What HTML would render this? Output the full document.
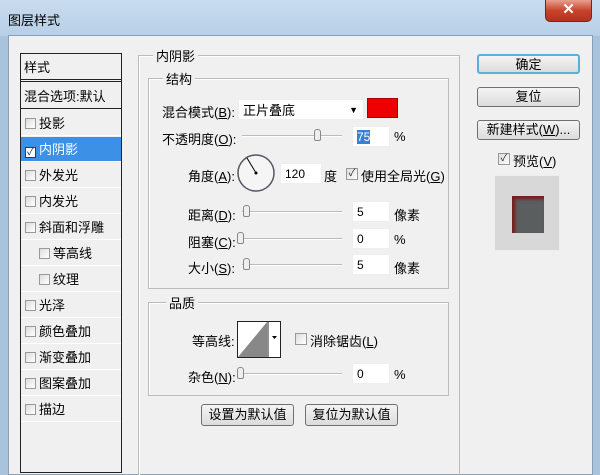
<!DOCTYPE html>
<html><head><meta charset="utf-8"><style>
*{margin:0;padding:0;box-sizing:border-box}
body{width:600px;height:470px;overflow:hidden;background:#a9c3dc;font-family:"Liberation Sans","Noto Sans CJK SC",sans-serif;font-size:13px;color:#000;position:relative}
.a{position:absolute;white-space:nowrap}
.title{left:0;top:0;width:600px;height:36px;background:linear-gradient(#c9dcef,#b7cfe7)}
.client{left:8px;top:35px;width:585px;height:440px;background:#f0f0f0;border:1px solid #8aa0b8}
.close{left:545px;top:0;width:47px;height:22px;background:linear-gradient(#e8a08e,#c8442c 50%,#b5311c);border:1px solid #6b2a20;border-top:none;border-radius:0 0 5px 5px;color:#fff;font-weight:bold;text-align:center;line-height:20px;font-size:15px}
.list{left:20px;top:53px;width:102px;height:420px;background:#f0f0f0;border:1px solid #222}
.it{position:absolute;left:0;width:100px;height:25px;line-height:25px;border-bottom:1px solid #fff}
.cb{display:inline-block;width:11px;height:11px;border:1px solid #999;background:linear-gradient(135deg,#ddd,#fff);vertical-align:-1px;margin-right:3px}
.grp{border:1px solid #bbb;box-shadow:1px 1px 0 #fff inset}
.lg{background:#f0f0f0;padding:0 3px}
.inp{background:#fff;border:1px solid #eee;height:21px;line-height:21px;padding-left:4px;font-size:12px}
.sl{height:2px;background:#bbb;border-bottom:1px solid #fff}
.th{width:7px;height:12px;border:1px solid #888;border-radius:3px 3px 2px 2px;background:#eee}
.btn{border:1px solid #707070;border-radius:3px;background:linear-gradient(#f4f4f4,#dcdcdc);text-align:center;line-height:18px}
</style></head><body>
<div class="a title"></div>
<div class="a" style="left:8px;top:10px;font-size:13px">图层样式</div>
<div class="a close">✕</div>
<div class="a client"></div>

<div class="a list">
 <div class="it" style="top:0;height:28px;line-height:28px;padding-left:3px;border-bottom:3px double #222">样式</div>
 <div class="it" style="top:30px;padding-left:3px;border-bottom:1px solid #222">混合选项:默认</div>
 <div class="it" style="top:57px;padding-left:4px"><span class="cb"></span>投影</div>
 <div class="it" style="top:83px;padding-left:4px;background:#3c91e6;color:#fff"><span class="cb" style="background:#fff;border-color:#336;color:#224;font-size:10px;line-height:9px;text-align:center">✓</span>内阴影</div>
 <div class="it" style="top:109px;padding-left:4px"><span class="cb"></span>外发光</div>
 <div class="it" style="top:135px;padding-left:4px"><span class="cb"></span>内发光</div>
 <div class="it" style="top:161px;padding-left:4px"><span class="cb"></span>斜面和浮雕</div>
 <div class="it" style="top:187px;padding-left:18px"><span class="cb"></span>等高线</div>
 <div class="it" style="top:213px;padding-left:18px"><span class="cb"></span>纹理</div>
 <div class="it" style="top:239px;padding-left:4px"><span class="cb"></span>光泽</div>
 <div class="it" style="top:265px;padding-left:4px"><span class="cb"></span>颜色叠加</div>
 <div class="it" style="top:291px;padding-left:4px"><span class="cb"></span>渐变叠加</div>
 <div class="it" style="top:317px;padding-left:4px"><span class="cb"></span>图案叠加</div>
 <div class="it" style="top:343px;padding-left:4px"><span class="cb"></span>描边</div>
</div>

<div class="a grp" style="left:138px;top:55px;width:322px;height:420px;border-bottom:none"></div>
<div class="a lg" style="left:153px;top:46px">内阴影</div>
<div class="a grp" style="left:148px;top:78px;width:301px;height:211px"></div>
<div class="a lg" style="left:163px;top:69px">结构</div>

<div class="a" style="left:162px;top:102px">混合模式(<u>B</u>):</div>
<div class="a inp" style="left:238px;top:99px;width:126px;font-size:13px">正片叠底<span style="position:absolute;right:5px;font-size:9px">▼</span></div>
<div class="a" style="left:367px;top:98px;width:31px;height:20px;background:#e00;border:1px solid #a00"></div>

<div class="a" style="left:162px;top:129px">不透明度(<u>O</u>):</div>
<div class="a sl" style="left:242px;top:135px;width:100px"></div>
<div class="a th" style="left:314px;top:129px"></div>
<div class="a inp" style="left:352px;top:126px;width:38px"><span style="background:#3a7fd0;color:#fff">75</span></div>
<div class="a" style="left:394px;top:129px">%</div>

<div class="a" style="left:188px;top:166px">角度(<u>A</u>):</div>
<svg class="a" style="left:236px;top:152px" width="40" height="42"><circle cx="20" cy="21" r="18" fill="#f5f5f5" stroke="#556" stroke-width="1.5"/><line x1="20" y1="21" x2="11" y2="6" stroke="#000"/><circle cx="20" cy="21" r="1.5"/></svg>
<div class="a inp" style="left:280px;top:163px;width:42px">120</div>
<div class="a" style="left:324px;top:166px">度</div>
<span class="a cb" style="left:346px;top:168px;width:12px;height:12px;font-size:10px;line-height:10px;text-align:center;color:#224">✓</span>
<div class="a" style="left:361px;top:166px">使用全局光(<u>G</u>)</div>

<div class="a" style="left:188px;top:205px">距离(<u>D</u>):</div>
<div class="a sl" style="left:242px;top:211px;width:100px"></div>
<div class="a th" style="left:243px;top:205px"></div>
<div class="a inp" style="left:352px;top:201px;width:38px">5</div>
<div class="a" style="left:394px;top:205px">像素</div>

<div class="a" style="left:188px;top:232px">阻塞(<u>C</u>):</div>
<div class="a sl" style="left:238px;top:238px;width:104px"></div>
<div class="a th" style="left:237px;top:232px"></div>
<div class="a inp" style="left:352px;top:228px;width:38px">0</div>
<div class="a" style="left:394px;top:232px">%</div>

<div class="a" style="left:188px;top:258px">大小(<u>S</u>):</div>
<div class="a sl" style="left:242px;top:264px;width:100px"></div>
<div class="a th" style="left:243px;top:258px"></div>
<div class="a inp" style="left:352px;top:254px;width:38px">5</div>
<div class="a" style="left:394px;top:258px">像素</div>

<div class="a grp" style="left:148px;top:302px;width:301px;height:94px"></div>
<div class="a lg" style="left:166px;top:293px">品质</div>
<div class="a" style="left:192px;top:331px">等高线:</div>
<svg class="a" style="left:237px;top:321px" width="44" height="37"><rect x="0.5" y="0.5" width="43" height="36" fill="#fff" stroke="#222"/><polygon points="1,36 30,1 30,36" fill="#888"/><line x1="31" y1="0" x2="31" y2="37" stroke="#222"/><polygon points="35,15 40,15 37.5,18" fill="#000"/></svg>
<span class="a cb" style="left:295px;top:333px;width:12px;height:12px"></span>
<div class="a" style="left:310px;top:331px">消除锯齿(<u>L</u>)</div>
<div class="a" style="left:188px;top:367px">杂色(<u>N</u>):</div>
<div class="a sl" style="left:238px;top:373px;width:104px"></div>
<div class="a th" style="left:237px;top:367px"></div>
<div class="a inp" style="left:352px;top:363px;width:38px">0</div>
<div class="a" style="left:394px;top:367px">%</div>

<div class="a btn" style="left:201px;top:404px;width:93px;height:22px;line-height:20px">设置为默认值</div>
<div class="a btn" style="left:305px;top:404px;width:93px;height:22px;line-height:20px">复位为默认值</div>

<div class="a btn" style="left:477px;top:54px;width:103px;height:20px;border:2px solid #5bb0d8">确定</div>
<div class="a btn" style="left:477px;top:87px;width:103px;height:20px">复位</div>
<div class="a btn" style="left:477px;top:120px;width:103px;height:20px">新建样式(<u>W</u>)...</div>
<span class="a cb" style="left:498px;top:153px;width:12px;height:12px;font-size:10px;line-height:10px;text-align:center;color:#224">✓</span>
<div class="a" style="left:513px;top:151px">预览(<u>V</u>)</div>
<div class="a" style="left:494px;top:175px;width:66px;height:76px;background:#d8d8d8;border:1px solid #eee"></div>
<div class="a" style="left:512px;top:196px;width:32px;height:37px;background:#5a5e5e;box-shadow:inset 3px 3px 3px #7a1a1a"></div>
</body></html>
